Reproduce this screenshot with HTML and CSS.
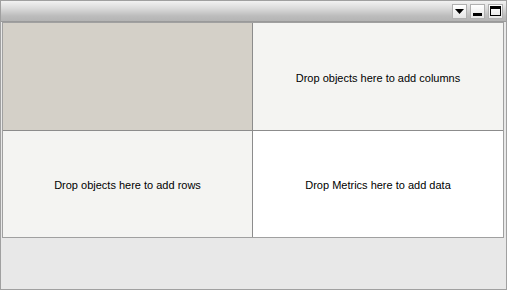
FILE: index.html
```html
<!DOCTYPE html>
<html>
<head>
<meta charset="utf-8">
<link rel="stylesheet" href="styles.css">
</head>
<body>
<div class="panel">
  <div class="titlebar">
    <div class="btn"><svg width="9" height="5" viewBox="0 0 9 5"><path d="M0 0H9L4.5 5Z" fill="#000"/></svg></div>
    <div class="btn"><span class="min"></span></div>
    <div class="btn"><span class="max"></span></div>
  </div>
  <div class="grid">
    <div class="cell corner"></div>
    <div class="cell cols">Drop objects here to add columns</div>
    <div class="cell rows">Drop objects here to add rows</div>
    <div class="cell data">Drop Metrics here to add data</div>
  </div>
</div>
</body>
</html>
```
FILE: styles.css
```css
html, body { margin: 0; padding: 0; }
body { width: 507px; height: 290px; font-family: "Liberation Sans", Arial, sans-serif; font-size: 11px; color: #000; }
.panel {
  box-sizing: border-box;
  width: 507px; height: 290px;
  border: 1px solid #a0a0a0;
  background: #e8e8e8;
  display: flex; flex-direction: column;
}
.titlebar {
  height: 20px;
  background: linear-gradient(#f2f2f2, #dcdcdc 35%, #bcbcbc 75%, #b4b4b4);
  border-bottom: 1px solid #9a9a9a;
  display: flex; justify-content: flex-end; align-items: center;
  gap: 3px; padding-right: 3px;
}
.btn {
  box-sizing: border-box;
  width: 15px; height: 15px;
  background: linear-gradient(#ffffff, #e6e6e6);
  border: 1px solid #b0b0b0;
  display: flex; align-items: center; justify-content: center;
}
.min { width: 9px; height: 3px; background: #000; margin-top: 6px; }
.max { box-sizing: border-box; width: 11px; height: 10px; border: 1px solid #000; border-top-width: 3px; }
.grid {
  margin: 0 2px 0 1px;
  display: grid;
  grid-template-columns: 249px 1fr;
  grid-template-rows: 107px 106px;
  border: 1px solid #a0a0a0;
  gap: 1px;
  background: #8c8c8c;
}
.cell { box-sizing: border-box; padding-top: 2px; display: flex; align-items: center; justify-content: center; }
.corner { background: #d4d0c8; }
.cols { background: #f4f4f2; }
.rows { background: #f4f4f2; }
.data { background: #ffffff; }
```
